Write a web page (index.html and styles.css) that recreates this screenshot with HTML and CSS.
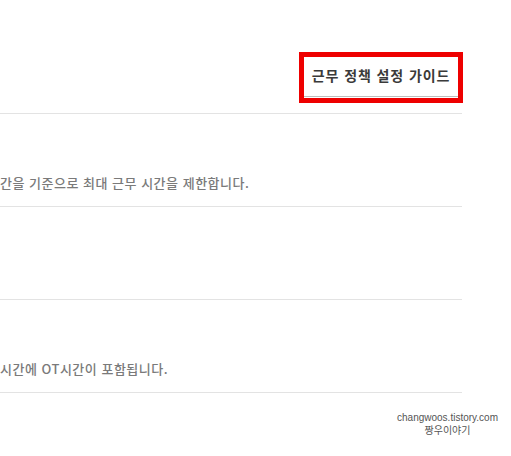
FILE: index.html
```html
<!DOCTYPE html>
<html lang="ko">
<head>
<meta charset="utf-8">
<title>근무 정책</title>
<link rel="stylesheet" href="styles.css">
</head>
<body>
<div class="page">
  <div class="header">
    <div class="guide-frame">
      <div class="guide-btn">근무 정책 설정 가이드</div>
    </div>
  </div>
  <div class="row">
    <p class="desc">간을 기준으로 최대 근무 시간을 제한합니다.</p>
  </div>
  <div class="row"></div>
  <div class="row">
    <p class="desc">시간에 OT시간이 포함됩니다.</p>
  </div>
</div>
<div class="footer">
  <div class="mark">
    <div class="mark-url">changwoos.tistory.com</div>
    <div class="mark-name">짱우이야기</div>
  </div>
</div>
</body>
</html>
```

FILE: styles.css
```css
html, body {
  margin: 0;
  padding: 0;
  background: #ffffff;
}
body {
  font-family: "Noto Sans CJK KR", "Noto Sans", sans-serif;
  width: 511px;
  height: 456px;
  overflow: hidden;
}
.page {
  width: 462px;
}
.header {
  height: 113px;
  border-bottom: 1px solid #e3e3e3;
  display: flex;
  justify-content: flex-end;
  align-items: flex-start;
}
.guide-frame {
  margin-top: 52px;
  margin-right: -1px;
  border: 5px solid #ee0000;
  padding-bottom: 1px;
  width: 154px;
}
.guide-btn {
  height: 36px;
  padding-bottom: 3px;
  border-bottom: 1px solid #bdbdbd;
  display: flex;
  align-items: center;
  justify-content: center;
  font-size: 14px;
  font-weight: 700;
  letter-spacing: 0.9px;
  color: #3a3a3a;
  white-space: nowrap;
}
.row {
  height: 92px;
  border-bottom: 1px solid #e3e3e3;
}
.desc {
  margin: 0;
  padding-top: 59px;
  line-height: 20px;
  font-size: 13px;
  font-weight: 500;
  letter-spacing: 0.5px;
  color: #7a7a7a;
  white-space: nowrap;
}
.footer {
  display: flex;
  justify-content: flex-end;
  padding-right: 13px;
  padding-top: 19px;
}
.mark {
  text-align: center;
  color: #555555;
  line-height: 12px;
}
.mark-url {
  font-family: "Liberation Sans", Arial, sans-serif;
  font-size: 10px;
}
.mark-name {
  font-family: "Noto Sans CJK KR", sans-serif;
  font-size: 10px;
}
```
